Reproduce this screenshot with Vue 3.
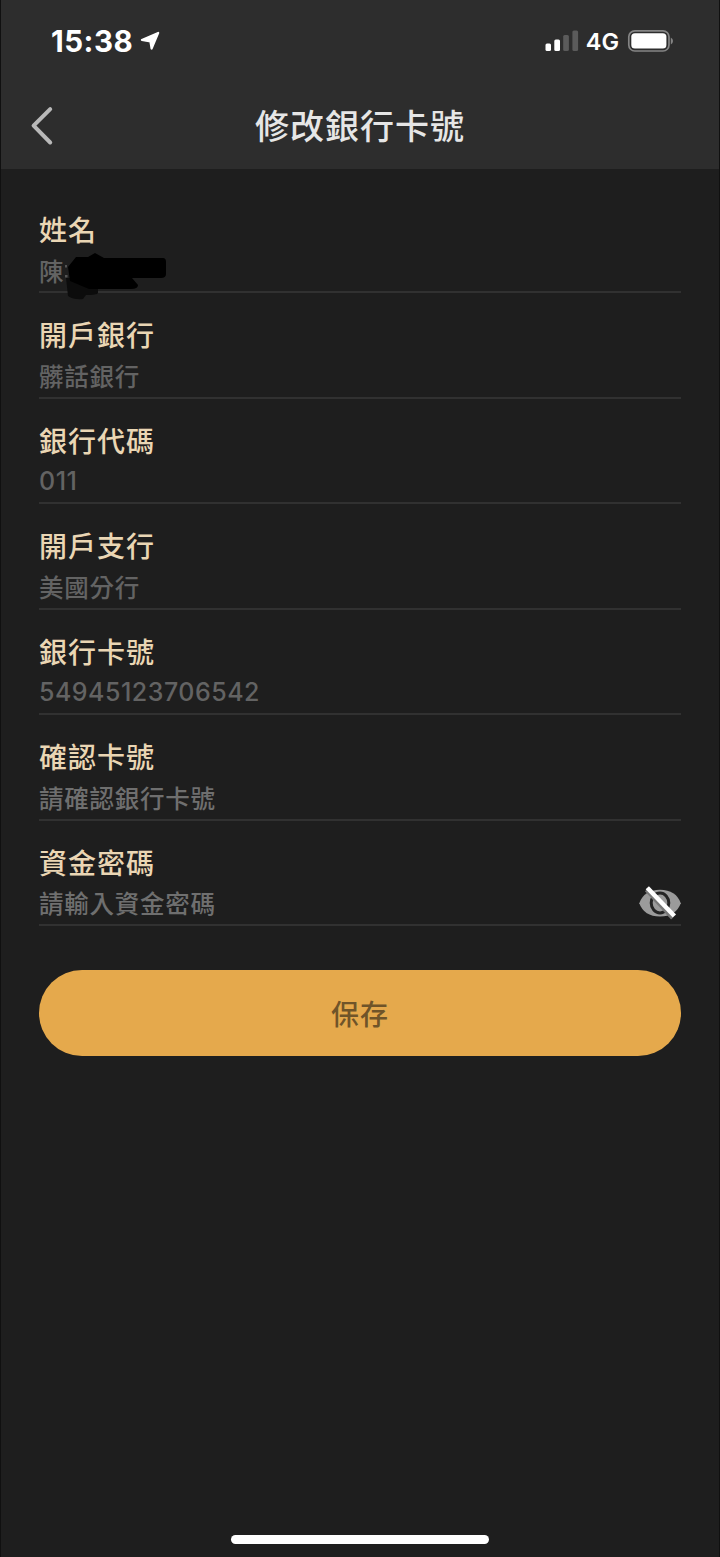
<template>
  <div class="page">
    <header class="header">
      <div class="status-bar">
        <div class="status-left">
          <span class="time">15:38</span>
          <svg class="location" viewBox="0 0 20 20">
            <path d="M18.2 1.9 L11.6 17.6 L10.4 10.4 L1.9 8.9 Z" />
          </svg>
        </div>
        <div class="status-right">
          <svg class="signal" viewBox="0 0 34 22">
            <rect x="0.5" y="13.5" width="5.5" height="7.5" rx="1.5" />
            <rect x="9.3" y="9.5" width="5.7" height="11.5" rx="1.5" />
            <rect class="signal-off" x="18.2" y="5" width="5.7" height="16" rx="1.5" />
            <rect class="signal-off" x="27.4" y="0.5" width="5.7" height="20.5" rx="1.5" />
          </svg>
          <span class="network">4G</span>
          <svg class="battery" viewBox="0 0 48 24">
            <rect class="battery-frame" x="1.8" y="1.8" width="40.2" height="20.2" rx="6" />
            <rect x="4.3" y="4.2" width="35.1" height="15.4" rx="3.6" />
            <path class="battery-cap" d="M43.8 8.4 Q46 9.5 46 11.9 Q46 14.3 43.8 15.4 Z" />
          </svg>
        </div>
      </div>
      <div class="nav-bar">
        <button class="back" type="button" aria-label="返回">
          <svg class="back-icon" viewBox="0 0 24 40">
            <path d="M20.2 3.1 L3.6 19.6 L20.2 36.5" />
          </svg>
        </button>
        <h1 class="title">修改銀行卡號</h1>
      </div>
    </header>

    <main class="form">
      <div v-for="field in fields" :key="field.label" class="field">
        <div class="label">{{ field.label }}</div>
        <div class="value-row">
          <span
            class="value"
            :class="{ placeholder: field.placeholder, digits: field.numeric }"
          >{{ field.value }}</span>
          <svg v-if="field.masked" class="mask" viewBox="0 0 110 54">
            <path class="mask-dots" d="M7 15 h2 v2.5 h-2 z M7 25 h2.5 v2.5 h-2.5 z" />
            <path class="mask-soft" d="M8 28 H40 V43 Q39 45 28 45 L25 49 Q16 50 10 46 Z" />
            <path d="M10 17 L18 7 L30 7 L37 3 L46 8 L105 8 Q108 8 108 12 V24 Q108 28 103 28 L74 28 L80 35 Q80 39 73 39 L31 39 L12 31 Z" />
          </svg>
          <svg v-if="field.secret" class="eye" viewBox="0 0 44 36">
            <path class="eye-shape" d="M1.3 18.2 Q6 5 22 4.8 Q38 5 42.8 18.2 Q38 31.3 22 31.6 Q6 31.3 1.3 18.2 Z" />
            <ellipse class="eye-ring" cx="22" cy="18" rx="8.8" ry="10" />
            <path class="eye-shade" d="M8 5.2 L34.2 33.6" />
            <path class="eye-slash" d="M9.3 2.8 L36.4 31" />
          </svg>
        </div>
      </div>
      <button class="save" type="button">保存</button>
    </main>

    <div class="home-indicator"></div>
  </div>
</template>

<script setup>
const fields = [
  { label: '姓名', value: '陳', masked: true },
  { label: '開戶銀行', value: '髒話銀行' },
  { label: '銀行代碼', value: '011', numeric: true },
  { label: '開戶支行', value: '美國分行' },
  { label: '銀行卡號', value: '54945123706542', numeric: true },
  { label: '確認卡號', value: '請確認銀行卡號', placeholder: true },
  { label: '資金密碼', value: '請輸入資金密碼', placeholder: true, secret: true }
]
</script>

<style>
body {
  background: #1e1e1e;
}
</style>

<style scoped>
.page {
  display: flex;
  flex-direction: column;
  box-sizing: border-box;
  height: 1557px;
  border: solid #101010;
  border-width: 0 1px;
  background: #1e1e1e;
  font-family: Inter, 'Noto Sans CJK TC', sans-serif;
}

.header {
  height: 169px;
  background: #2d2d2d;
}

.status-bar {
  display: flex;
  justify-content: space-between;
  align-items: center;
  height: 82px;
  padding: 0 44px 0 50px;
  color: #fff;
}

.status-left,
.status-right {
  display: flex;
  align-items: center;
}

.time {
  font-size: 29.5px;
  font-weight: 700;
  letter-spacing: 0.5px;
}

.location {
  width: 20px;
  height: 20px;
  margin-left: 7px;
  fill: #fff;
  stroke: #fff;
  stroke-width: 2.2;
  stroke-linejoin: round;
}

.signal {
  width: 34px;
  height: 22px;
  fill: #fff;
}

.signal-off {
  fill: #5b5b5b;
}

.network {
  margin-left: 7px;
  font-size: 23.5px;
  font-weight: 600;
}

.battery {
  width: 48px;
  height: 24px;
  margin-left: 8px;
  fill: #fff;
}

.battery-frame {
  fill: none;
  stroke: #858585;
  stroke-width: 1.7;
}

.battery-cap {
  fill: #858585;
}

.nav-bar {
  display: grid;
  grid-template-columns: 80px 1fr 80px;
  align-items: center;
  height: 87px;
}

.back {
  display: flex;
  padding: 0 0 0 29px;
  border: 0;
  background: none;
}

.back-icon {
  width: 24px;
  height: 40px;
  fill: none;
  stroke: #b9b9b9;
  stroke-width: 4;
  stroke-linecap: round;
  stroke-linejoin: round;
}

.title {
  margin: 0;
  padding-top: 3px;
  color: #e6e6e6;
  font-size: 34px;
  font-weight: 500;
  letter-spacing: 1px;
  line-height: 40px;
  text-align: center;
}

.form {
  display: flex;
  flex-direction: column;
  padding: 19px 38px 0;
}

.field {
  box-sizing: border-box;
  height: 105.45px;
  padding-top: 24px;
  border-bottom: 2px solid #313131;
}

.label {
  height: 38px;
  color: #ead6b4;
  font-size: 28px;
  font-weight: 500;
  letter-spacing: 1px;
  line-height: 39px;
}

.value-row {
  position: relative;
  display: flex;
  justify-content: space-between;
  align-items: center;
  height: 40px;
}

.value {
  color: #636363;
  font-size: 24.5px;
  font-weight: 500;
  letter-spacing: 0.75px;
}

.placeholder {
  color: #6f6f6f;
}

.digits {
  padding-top: 1px;
  font-size: 25px;
  letter-spacing: 0.5px;
}

.mask {
  position: absolute;
  top: 0;
  left: 19px;
  width: 110px;
  height: 54px;
  fill: #000;
}

.mask-soft {
  fill: #0c0c0c;
}

.mask-dots {
  fill: #555;
}

.eye {
  width: 44px;
  height: 36px;
  margin-right: -1px;
}

.eye-shape {
  fill: #9b9b9b;
}

.eye-ring {
  fill: none;
  stroke: #242424;
  stroke-width: 3;
}

.eye-shade {
  fill: none;
  stroke: #777;
  stroke-width: 3;
}

.eye-slash {
  fill: none;
  stroke: #fff;
  stroke-width: 4.5;
}

.save {
  height: 86px;
  margin-top: 44px;
  padding: 0;
  border: 0;
  border-radius: 43px;
  background: #e5a94c;
  color: #6f5429;
  font-family: inherit;
  font-size: 28px;
  font-weight: 500;
  letter-spacing: 0.9px;
}

.home-indicator {
  width: 258px;
  height: 9px;
  margin: auto auto 13px;
  border-radius: 5px;
  background: #fff;
}
</style>
